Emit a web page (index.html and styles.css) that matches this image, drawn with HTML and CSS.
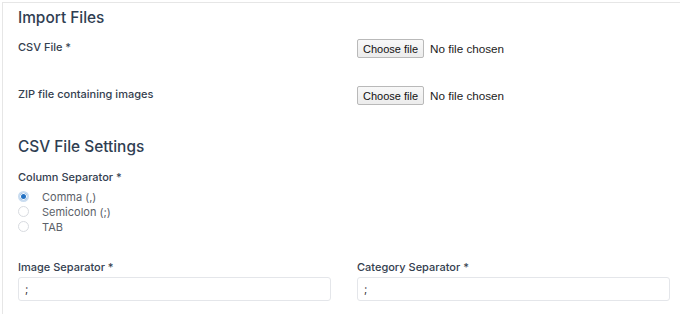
FILE: index.html
```html
<!DOCTYPE html>
<html>
	<head>
		<meta charset="UTF-8">
		<title>Import</title>
		<link rel="stylesheet" href="styles.css">
	</head>
	<body>
		<div class="card">
			<h2 class="title">Import Files</h2>
			<div class="row row-file">
				<label class="lbl">CSV File *</label>
				<div class="file">
					<button class="file-btn" type="button">Choose file</button>
					<span class="file-name">No file chosen</span>
				</div>
			</div>
			<div class="row row-file">
				<label class="lbl">ZIP file containing images</label>
				<div class="file">
					<button class="file-btn" type="button">Choose file</button>
					<span class="file-name">No file chosen</span>
				</div>
			</div>

			<h2 class="title title-sm">CSV File Settings</h2>
			<div class="group">
				<label class="lbl">Column Separator *</label>
				<ul class="radios">
					<li><span class="radio checked"></span>Comma (,)</li>
					<li><span class="radio"></span>Semicolon (;)</li>
					<li><span class="radio"></span>TAB</li>
				</ul>
			</div>

			<div class="row row-input">
				<div class="field">
					<label class="lbl">Image Separator *</label>
					<input class="txt" type="text" value=";">
				</div>
				<div class="field">
					<label class="lbl">Category Separator *</label>
					<input class="txt" type="text" value=";">
				</div>
			</div>
		</div>
	</body>
</html>
```
FILE: styles.css
```css
html, body{
	margin: 0;
	padding: 0;
	background: #fff;
	overflow: hidden;
}
.card{
	margin: 2px -20px 0 2px;
	padding: 0 30px 20px 15px;
	border: 1px solid #e6e6e6;
	border-right: none;
	font-family: Inter, "Noto Sans", sans-serif;
}
.title{
	margin: 0;
	padding: 4px 0 0;
	height: 26px;
	line-height: 22px;
	font-size: 15.4px;
	font-weight: 500;
	color: #2f3e52;
}
.title-sm{
	padding-top: 0;
	margin-top: 9px;
}
.lbl{
	display: block;
	font-size: 11px;
	font-weight: 500;
	color: #34404f;
	line-height: 16px;
}
.row{
	display: grid;
	grid-template-columns: 1fr 1fr;
	column-gap: 26px;
}
.row-file{
	height: 44px;
	align-items: start;
	padding-top: 3px;
}
.row-file .lbl{
	padding-top: 3px;
}
.file{
	display: flex;
	align-items: center;
	gap: 6px;
	margin-top: 3px;
	font-family: "Liberation Sans", Arial, sans-serif;
	font-size: 11.7px;
	color: #222;
}
.file-btn{
	height: 19px;
	padding: 0 5px;
	font-family: "Liberation Sans", Arial, sans-serif;
	font-size: 11px;
	color: #111;
	background: linear-gradient(#f8f8f8, #ececec);
	border: 1px solid #b9b9b9;
	border-radius: 2px;
}
.group{
	margin-top: 7px;
}
.radios{
	list-style: none;
	margin: 4px 0 0;
	padding: 0;
}
.radios li{
	display: flex;
	align-items: center;
	height: 15px;
	font-size: 11px;
	color: #5b6169;
}
.radio{
	box-sizing: border-box;
	width: 11px;
	height: 11px;
	margin: 0 13px 0 0;
	border: 1px solid #d8dbe0;
	border-radius: 50%;
	background: #fff;
}
.radio.checked{
	border: 2px solid #c9dcf0;
	background: #2271c3;
	box-shadow: inset 0 0 0 1px #fff;
}
.row-input{
	margin-top: 25px;
}
.field .lbl{
	margin-bottom: 2px;
}
.txt{
	box-sizing: border-box;
	display: block;
	width: 100%;
	height: 24px;
	padding: 0 6px;
	border: 1px solid #e4e6ea;
	border-radius: 3px;
	font-family: Inter, "Noto Sans", sans-serif;
	font-size: 11px;
	color: #333;
}
```
